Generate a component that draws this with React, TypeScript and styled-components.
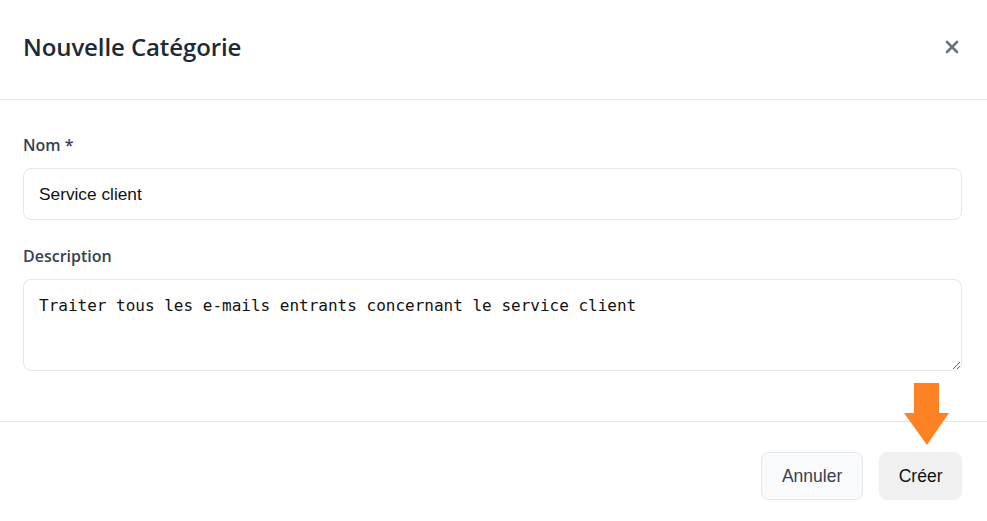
import React from "react";
import styled, { createGlobalStyle } from "styled-components";

const Global = createGlobalStyle`
  html, body { margin: 0; padding: 0; background: #ffffff; }
  * { box-sizing: border-box; }
`;

const Dialog = styled.div`
  position: relative;
  width: 987px;
  height: 521px;
  background: #ffffff;
  display: flex;
  flex-direction: column;
`;

const Header = styled.header`
  height: 100px;
  padding: 0 24px 7px 23px;
  display: flex;
  align-items: center;
  justify-content: space-between;
  border-bottom: 1px solid #e5e7eb;
`;

const Title = styled.h2`
  margin: 0;
  font-family: "Open Sans", "Noto Sans", sans-serif;
  font-weight: 600;
  font-size: 24px;
  color: #1f2937;
  letter-spacing: -0.1px;
`;

const CloseButton = styled.button`
  border: none;
  background: transparent;
  padding: 0;
  width: 24px;
  height: 24px;
  margin-right: -1px;
  margin-top: 2px;
  display: flex;
  align-items: center;
  justify-content: center;
  color: #6b7280;
  cursor: pointer;
`;

const Body = styled.div`
  padding: 34px 25px 50px 23px;
  display: flex;
  flex-direction: column;
`;

const Field = styled.div`
  display: flex;
  flex-direction: column;
  gap: 12px;
  & + & { margin-top: 25px; }
`;

const Label = styled.label`
  font-family: "Open Sans", "Noto Sans", sans-serif;
  font-weight: 600;
  font-size: 16px;
  line-height: 22px;
  color: #374151;
`;

const TextInput = styled.input`
  height: 52px;
  width: 100%;
  padding: 0 15px;
  border: 1px solid #e5e7eb;
  border-radius: 8px;
  font-family: "Liberation Sans", Arial, sans-serif;
  font-size: 17.3px;
  color: #111111;
  background: #ffffff;
  outline: none;
`;

const TextArea = styled.textarea`
  height: 92px;
  width: 100%;
  padding: 15px 15px;
  border: 1px solid #e5e7eb;
  border-radius: 8px;
  font-family: "DejaVu Sans Mono", "Liberation Mono", monospace;
  font-size: 16px;
  line-height: 22px;
  color: #111111;
  background: #ffffff;
  outline: none;
  resize: vertical;
`;

const Footer = styled.footer`
  border-top: 1px solid #e5e7eb;
  padding: 30px 25px 21px;
  display: flex;
  justify-content: flex-end;
  gap: 16px;
`;

const Button = styled.button<{ $variant: "secondary" | "primary" }>`
  height: 48px;
  padding: 0 ${(p) => (p.$variant === "secondary" ? "20px" : "18.5px")};
  border-radius: 8px;
  font-family: "Liberation Sans", Arial, sans-serif;
  font-size: 17.5px;
  cursor: pointer;
  border: 1px solid ${(p) => (p.$variant === "secondary" ? "#e5e7eb" : "#f0f0f0")};
  background: ${(p) => (p.$variant === "secondary" ? "#f9fafb" : "#f0f0f0")};
  color: ${(p) => (p.$variant === "secondary" ? "#374151" : "#111111")};
`;

const Arrow = styled.svg`
  position: absolute;
  left: 904px;
  top: 383px;
`;

export default function App() {
  return (
    <>
      <Global />
      <Dialog>
        <Header>
          <Title>Nouvelle Catégorie</Title>
          <CloseButton aria-label="Fermer">
            <svg width="14" height="14" viewBox="0 0 14 14">
              <path d="M2 2 L12 12 M12 2 L2 12" stroke="currentColor" strokeWidth="2.6" strokeLinecap="round" />
            </svg>
          </CloseButton>
        </Header>
        <Body>
          <Field>
            <Label>Nom *</Label>
            <TextInput defaultValue="Service client" />
          </Field>
          <Field>
            <Label>Description</Label>
            <TextArea defaultValue="Traiter tous les e-mails entrants concernant le service client" />
          </Field>
        </Body>
        <Footer>
          <Button $variant="secondary">Annuler</Button>
          <Button $variant="primary">Créer</Button>
        </Footer>
        <Arrow width="46" height="63" viewBox="0 0 46 63">
          <polygon points="10,0 35,0 35,30 45,30 23,62 0,30 10,30" fill="#fd8224" />
        </Arrow>
      </Dialog>
    </>
  );
}
